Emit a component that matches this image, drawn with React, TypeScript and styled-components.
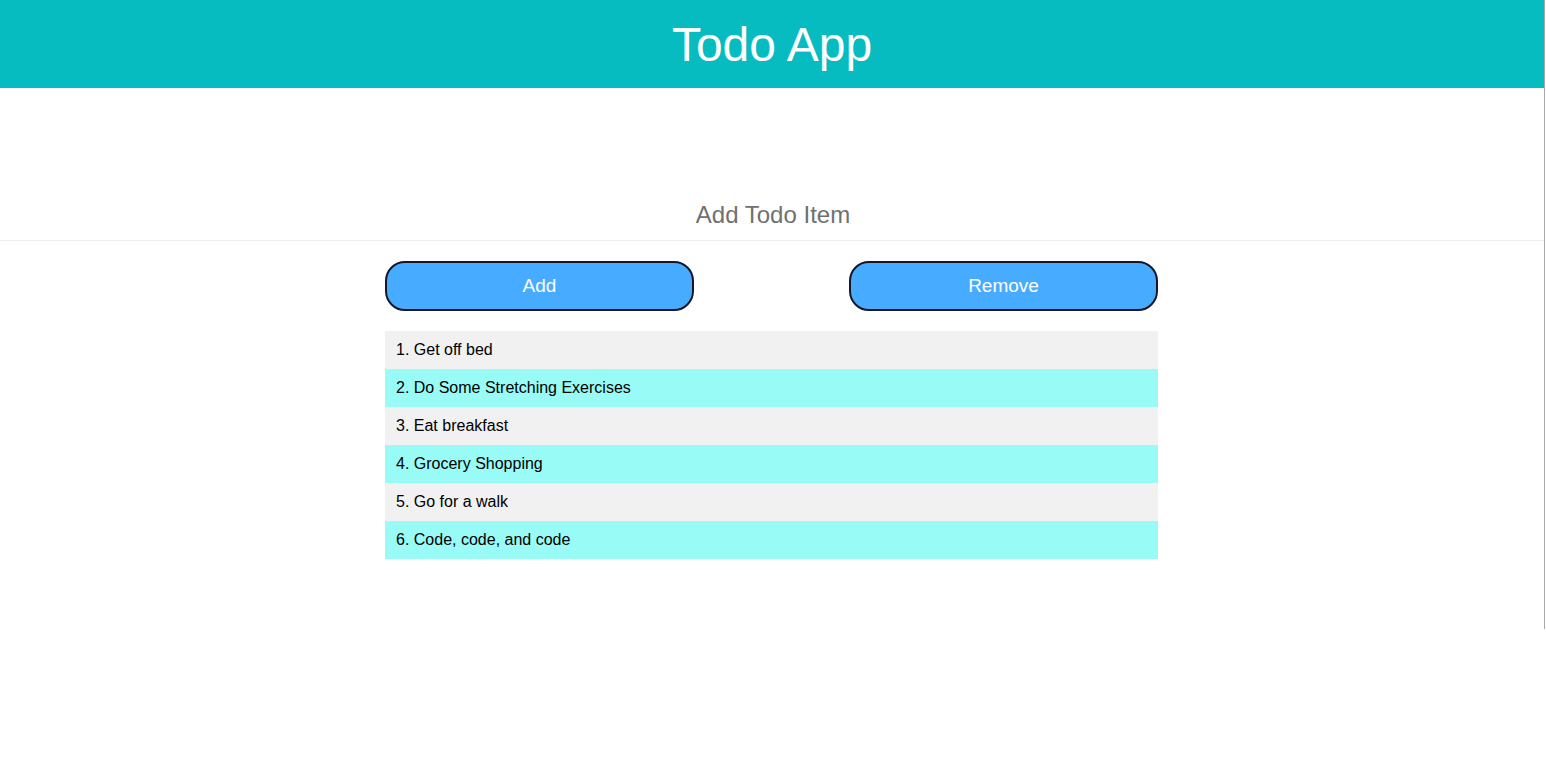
import React from "react";
import styled, { createGlobalStyle } from "styled-components";

const GlobalStyle = createGlobalStyle`
  html, body { margin: 0; padding: 0; background: #ffffff; }
  body { font-family: "Liberation Sans", Arial, sans-serif; }
`;

const Page = styled.div`
  width: 1544px;
  height: 629px;
  border-right: 1px solid #a9a9a9;
`;

const Header = styled.header`
  height: 88px;
  background: #06bcc1;
  display: flex;
  align-items: center;
  justify-content: center;
`;

const Title = styled.h1`
  margin: 0;
  color: #ffffff;
  font-size: 48px;
  font-weight: 400;
  line-height: 1;
  padding-top: 2px;
`;

const SectionHead = styled.div`
  height: 153px;
  border-bottom: 1px solid #eeeeee;
  display: flex;
  align-items: flex-end;
  justify-content: center;
  box-sizing: border-box;
`;

const SectionTitle = styled.h2`
  margin: 0 0 12px 2px;
  font-size: 24px;
  font-weight: 400;
  line-height: 27px;
  color: #707070;
`;

const Content = styled.div`
  width: 773px;
  margin: 20px 0 0 calc((100% - 774px) / 2);
`;

const ButtonRow = styled.div`
  display: flex;
  justify-content: space-between;
`;

const ActionButton = styled.button`
  width: 309px;
  height: 50px;
  box-sizing: border-box;
  background: #47abff;
  border: 2px solid #15162a;
  border-radius: 20px;
  color: #ffffff;
  font-family: "Liberation Sans", Arial, sans-serif;
  font-size: 19px;
  cursor: pointer;
`;

const List = styled.ol`
  list-style: none;
  margin: 20px 0 0;
  padding: 0;
`;

const Row = styled.li<{ $alt: boolean }>`
  height: 38px;
  display: flex;
  align-items: center;
  padding-left: 11px;
  background: ${(p) => (p.$alt ? "#98fbf6" : "#f1f1f1")};
  color: #000000;
  font-size: 16px;
`;

const items = [
  "Get off bed",
  "Do Some Stretching Exercises",
  "Eat breakfast",
  "Grocery Shopping",
  "Go for a walk",
  "Code, code, and code",
];

export default function App() {
  return (
    <>
      <GlobalStyle />
      <Page>
        <Header>
          <Title>Todo App</Title>
        </Header>
        <SectionHead>
          <SectionTitle>Add Todo Item</SectionTitle>
        </SectionHead>
        <Content>
          <ButtonRow>
            <ActionButton>Add</ActionButton>
            <ActionButton>Remove</ActionButton>
          </ButtonRow>
          <List>
            {items.map((t, i) => (
              <Row key={t} $alt={i % 2 === 1}>
                {i + 1}. {t}
              </Row>
            ))}
          </List>
        </Content>
      </Page>
    </>
  );
}
